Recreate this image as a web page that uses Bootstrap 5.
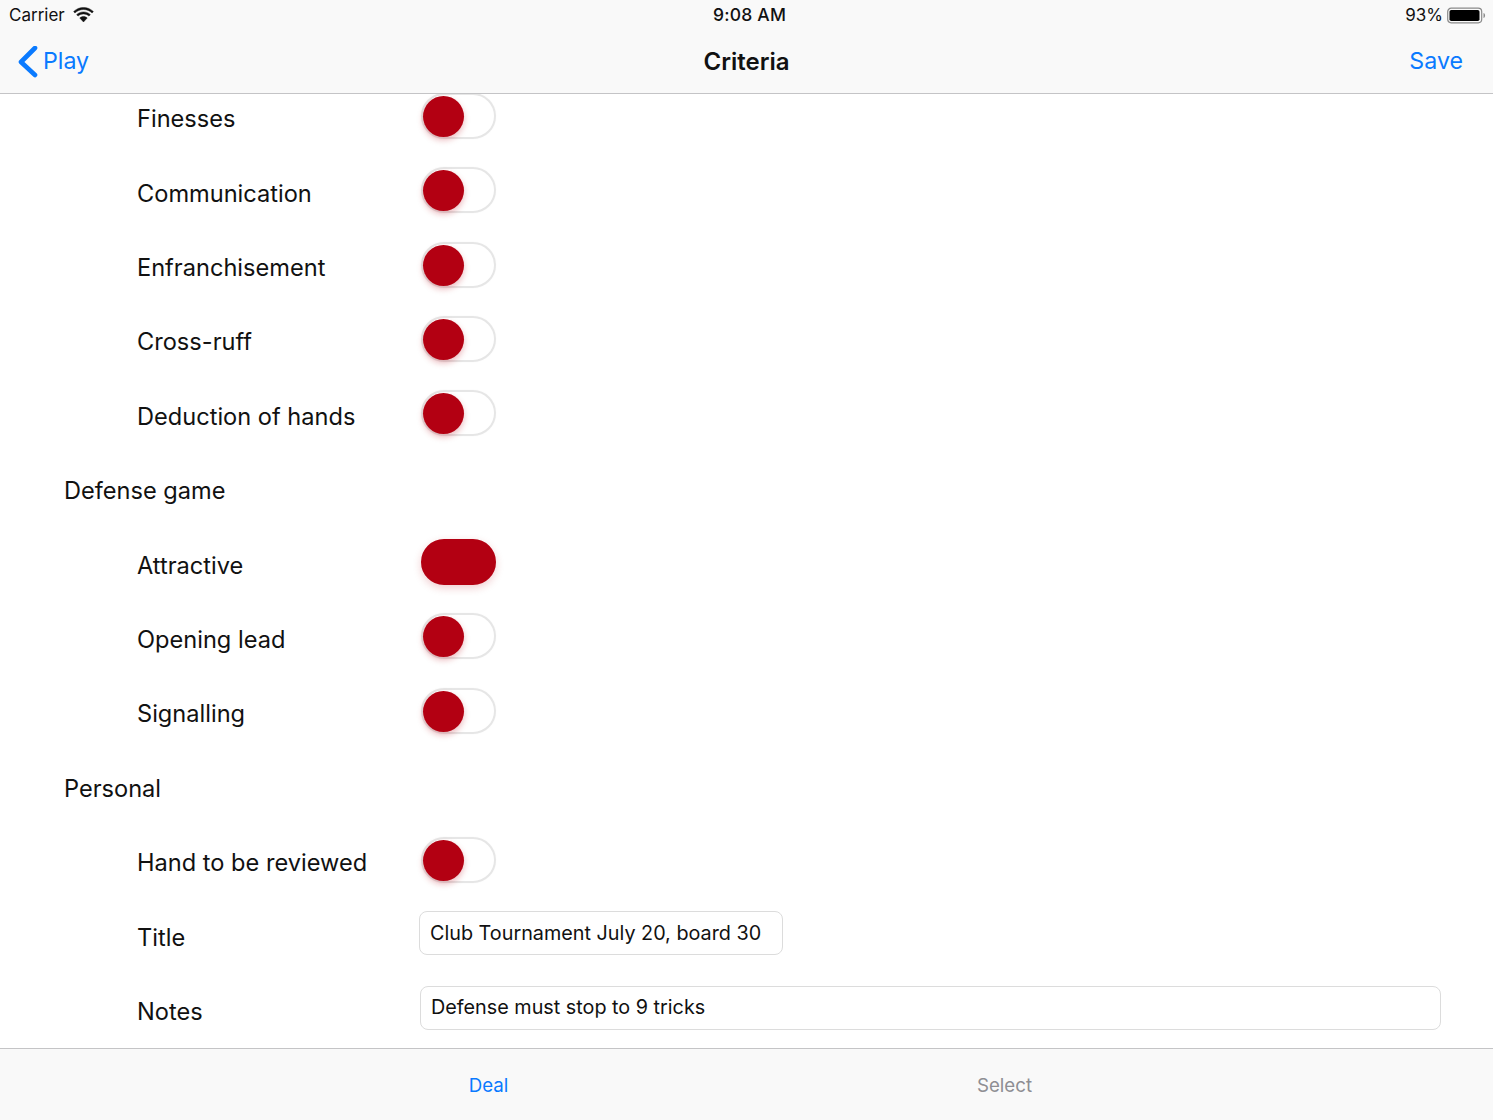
<!DOCTYPE html>
<html lang="en">
<head>
<meta charset="utf-8">
<title>Criteria</title>
<link href="https://cdn.jsdelivr.net/npm/bootstrap@5.3.0/dist/css/bootstrap.min.css" rel="stylesheet">
<style>
html,body{height:100%;overflow:hidden}
body{font-family:Inter,"Liberation Sans",sans-serif;color:#111;background:#fff;width:1493px;height:1120px}
.app-shell{height:1120px}
.top-bars{background:#f9f9f9;border-bottom:1px solid #c4c4c6;height:94px;flex:none}
.status-line{height:30px;padding:0 7px 0 9px;font-size:17px;line-height:30px}
.status-time{font-weight:500;font-size:17.500px;letter-spacing:.2px;left:713px}
.nav-line{height:63px;font-size:23.200px;line-height:62px}
.nav-link-blue{color:#0a7aff;text-decoration:none}
.play-text{margin-left:-1px;margin-top:-1px}
.nav-title{font-weight:600;font-size:24px;line-height:63px;left:50%;transform:translateX(-50%);top:0}
.scroll-area{flex:1 1 auto;overflow:hidden;min-height:0}
.scroll-inner{margin-top:-12.200px}
.crit-row{height:74.400px;font-size:23.600px}
.crit-label{width:421px;padding-left:137px;flex:none}
.crit-head{padding-left:64px}
.sw{display:block;width:75px;height:46px;border-radius:23px;border:2px solid #e6e6e6;background:#fff;margin-top:-6.500px;padding:1px 0;box-shadow:0 0 2px rgba(0,0,0,.03)}
.sw-thumb{display:block;width:41px;height:41px;border-radius:50%;background:#b30012;box-shadow:0 3px 6px rgba(179,0,18,.28)}
.sw-on{background:#b30012;border-color:#b30012;box-shadow:0 3px 8px rgba(179,0,18,.2)}
.text-box{border:1px solid #dcdcdc;border-radius:8px;height:44px;font-size:19.800px;line-height:41px;padding:0 10px;color:#111;background:#fff;margin-top:-8px;white-space:nowrap}
.box-title{width:364px;margin-left:-2px;line-height:42px}
.box-notes{width:1021px;margin-left:-1px;margin-top:-7.500px}
.tab-bar{background:#f9f9f9;border-top:1px solid #c4c4c6;height:72px;flex:none;font-size:18.700px}
.tab-item{width:516px;text-align:center;text-decoration:none;line-height:73px}
.tab-on{color:#0a7aff}
.tab-off{color:#8e8e93}
</style>
</head>
<body>
<div class="app-shell d-flex flex-column">
  <header class="top-bars">
    <div class="status-line d-flex align-items-center position-relative">
      <span>Carrier</span>
      <svg class="ms-2" width="21" height="16" viewBox="0 0 23 17"><path d="M11.5 2.5c3.6 0 6.9 1.4 9.4 3.8l1.4-1.6C19.4 1.9 15.600.2 11.500.2S3.600 1.900.7 4.700l1.400 1.600C4.600 3.900 7.900 2.500 11.500 2.500zM11.500 7.300c2.300 0 4.400.9 6 2.400l1.500-1.600c-2-1.900-4.600-3-7.500-3s-5.500 1.100-7.500 3l1.500 1.600c1.600-1.500 3.700-2.400 6-2.400zM15.600 11.700c-1.100-1-2.500-1.600-4.100-1.600s-3 .6-4.100 1.600l4.100 4.500z" fill="#111" stroke="#111" stroke-width=".5"/></svg>
      <span class="status-time position-absolute">9:08 AM</span>
      <span class="ms-auto d-flex align-items-center gap-1">
        <span>93%</span>
        <svg width="39" height="17" viewBox="0 0 39 17"><rect x=".7" y="1.200" width="34" height="14.600" rx="3.500" fill="none" stroke="#8a8a8a" stroke-width="1.200"/><rect x="2.500" y="3" width="30" height="11" rx="1.800" fill="#000"/><path d="M36.500 6v5c1-.3 1.600-1.300 1.600-2.500S37.500 6.300 36.500 6z" fill="#8a8a8a"/></svg>
      </span>
    </div>
    <nav class="nav-line d-flex position-relative justify-content-between">
      <a class="nav-link-blue d-flex align-items-center" href="#">
        <svg width="44" height="32" viewBox="0 0 44 32"><path d="M35 3 L21 17 L35 30" transform="translate(0,-1)" fill="none" stroke="#0a7aff" stroke-width="4.600" stroke-linecap="round" stroke-linejoin="round"/></svg>
        <span class="play-text">Play</span>
      </a>
      <span class="nav-title position-absolute">Criteria</span>
      <a class="nav-link-blue" style="margin-right:30px" href="#">Save</a>
    </nav>
  </header>

  <main class="scroll-area">
    <div class="scroll-inner">
      <div class="crit-row d-flex align-items-center"><span class="crit-label">Finesses</span><span class="sw"><span class="sw-thumb"></span></span></div>
      <div class="crit-row d-flex align-items-center"><span class="crit-label">Communication</span><span class="sw"><span class="sw-thumb"></span></span></div>
      <div class="crit-row d-flex align-items-center"><span class="crit-label">Enfranchisement</span><span class="sw"><span class="sw-thumb"></span></span></div>
      <div class="crit-row d-flex align-items-center"><span class="crit-label">Cross-ruff</span><span class="sw"><span class="sw-thumb"></span></span></div>
      <div class="crit-row d-flex align-items-center"><span class="crit-label">Deduction of hands</span><span class="sw"><span class="sw-thumb"></span></span></div>
      <div class="crit-row d-flex align-items-center crit-head">Defense game</div>
      <div class="crit-row d-flex align-items-center"><span class="crit-label">Attractive</span><span class="sw sw-on"></span></div>
      <div class="crit-row d-flex align-items-center"><span class="crit-label">Opening lead</span><span class="sw"><span class="sw-thumb"></span></span></div>
      <div class="crit-row d-flex align-items-center"><span class="crit-label">Signalling</span><span class="sw"><span class="sw-thumb"></span></span></div>
      <div class="crit-row d-flex align-items-center crit-head">Personal</div>
      <div class="crit-row d-flex align-items-center"><span class="crit-label">Hand to be reviewed</span><span class="sw"><span class="sw-thumb"></span></span></div>
      <div class="crit-row d-flex align-items-center"><span class="crit-label">Title</span><div class="text-box box-title">Club Tournament July 20, board 30</div></div>
      <div class="crit-row d-flex align-items-center"><span class="crit-label">Notes</span><div class="text-box box-notes">Defense must stop to 9 tricks</div></div>
    </div>
  </main>

  <footer class="tab-bar d-flex justify-content-center">
    <a class="tab-item tab-on" href="#">Deal</a>
    <a class="tab-item tab-off" href="#">Select</a>
  </footer>
</div>
<script src="https://cdn.jsdelivr.net/npm/bootstrap@5.3.0/dist/js/bootstrap.bundle.min.js"></script>
</body>
</html>
